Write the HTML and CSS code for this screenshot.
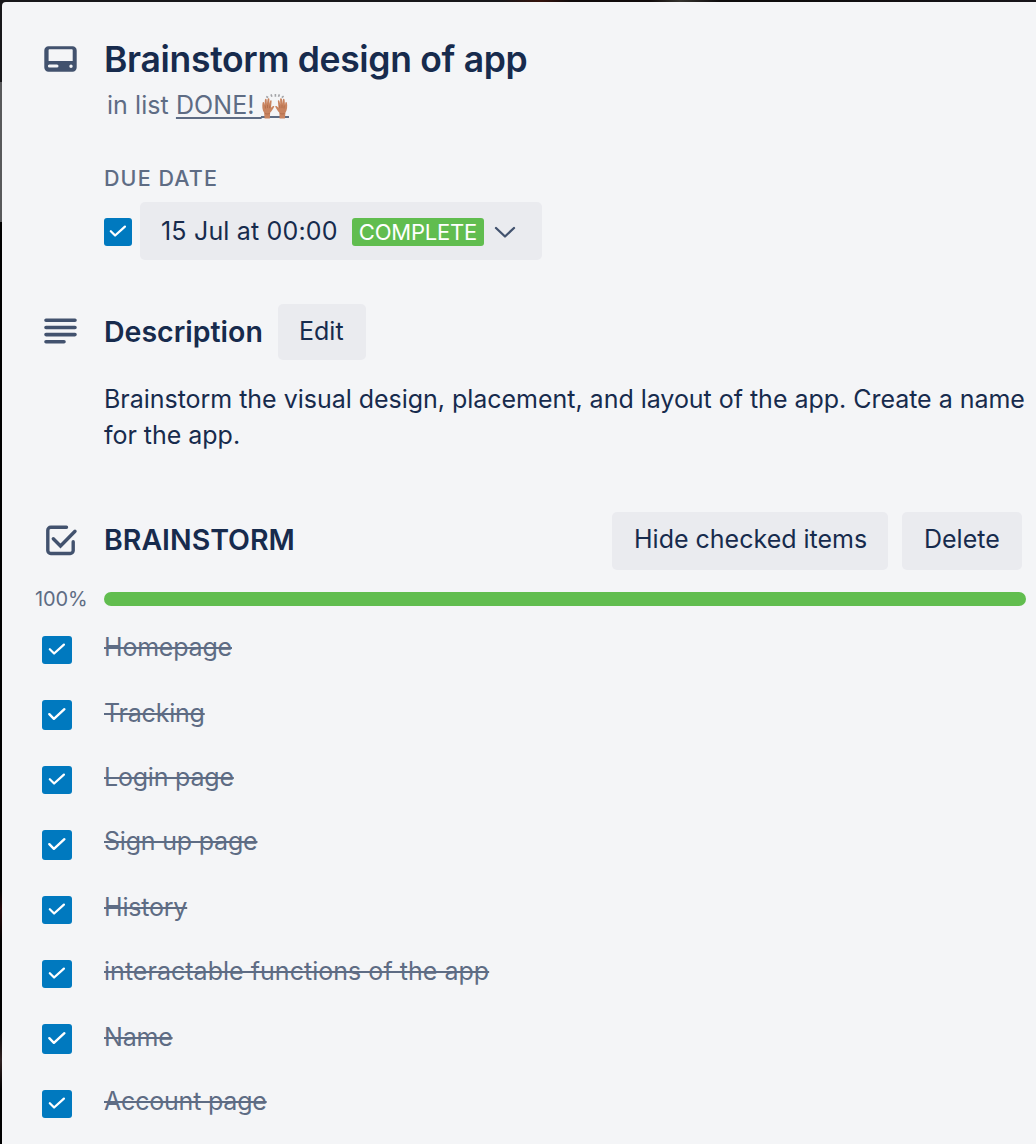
FILE: index.html
```html
<!DOCTYPE html>
<html lang="en">
<head>
<meta charset="utf-8">
<title>Brainstorm design of app</title>
<link rel="stylesheet" href="styles.css">
</head>
<body>
<svg class="symbols" aria-hidden="true">
  <symbol id="tick" viewBox="0 0 30 30"><path d="M7.3 14.2l4.6 4.6 10.5-9.6" fill="none" stroke="#fff" stroke-width="2.4" stroke-linecap="round" stroke-linejoin="round"/></symbol>
</svg>
<main class="card">
  <header class="card-header">
    <svg class="icon" viewBox="0 0 34 34"><path fill-rule="evenodd" d="M4.5 4.3h24a4.2 4.2 0 0 1 4.2 4.2v17a4.2 4.2 0 0 1-4.2 4.2h-24a4.2 4.2 0 0 1-4.2-4.2v-17a4.2 4.2 0 0 1 4.2-4.2zM4.6 8.1v10.8h24.1V8.1a.8.8 0 0 0-.8-.8H5.4a.8.8 0 0 0-.8.8zM5.4 22.6a1.5 1.5 0 0 0 0 3h7.6a1.5 1.5 0 0 0 0-3zM27 22.5a1.7 1.7 0 1 0 0 3.4 1.7 1.7 0 0 0 0-3.4z"/></svg>
    <h1 class="title">Brainstorm design of app</h1>
    <p class="in-list">in list <a class="list-link">DONE! <svg class="hands" viewBox="0 0 28 28"><g fill="none" stroke="#a3a4a8" stroke-width="1.6"><path d="M5.2 4.5l2 1M10 2.4l.9 2.3M14.4 2v2.8M18.4 2.4l-.9 2.3M22.6 4.2l-1.8 1.4"/></g><path d="M0 25h28" stroke="#5e6c84" stroke-width="2"/><g id="hand"><path fill="#c98460" d="M3.6 26.6l-.5-5.8C1.2 18 1 14 1.6 10.8c.3-1.3 1.5-1 1.6.1l.3 2 .4-5c.1-1.4 1.7-1.4 1.8 0l.2 3.8.7-4.6c.3-1.3 1.8-1 1.8.2l-.1 4.8.8-3.1c.4-1.1 1.6-.7 1.5.4l-.6 6.3 1.7-1.4c.9-.8 1.9-.3 1.4.7-1.1 2-2.4 4.4-4 5.8l-.2 5.8z"/><path d="M4.3 13.5l.2 3M6.5 12.8v3.3M8.9 13.4l-.3 2.8M4 21.5c2 .8 3.4.5 4.9-.4" fill="none" stroke="#aa6545" stroke-width=".7"/></g><use href="#hand" transform="matrix(-1 0 0 1 27.5 0)"/></svg></a></p>
  </header>

  <section class="due">
    <h3 class="label">DUE DATE</h3>
    <div class="due-row">
      <svg class="check"><use href="#tick"/></svg>
      <button class="button date"><span class="date-text">15 Jul at 00:00</span><span class="badge">COMPLETE</span><svg class="chevron" viewBox="0 0 22 14"><path d="M2 2l9 8.5L20 2" fill="none" stroke="#42526e" stroke-width="2.3" stroke-linecap="round" stroke-linejoin="round"/></svg></button>
    </div>
  </section>

  <section class="description">
    <div class="section-head">
      <svg class="icon" viewBox="0 0 34 34"><path d="M2 5.3h29M2 12.5h29M2 19.6h29M2 26.8h18" stroke="#42526e" stroke-width="3.6" stroke-linecap="round"/></svg>
      <h2 class="heading">Description</h2>
      <button class="button edit"><span>Edit</span></button>
    </div>
    <p class="text">Brainstorm the visual design, placement, and layout of the app. Create a name<br>for the app.</p>
  </section>

  <section class="checklist">
    <div class="section-head">
      <svg class="icon" viewBox="0 0 34 34"><path d="M22.5 4.2H6.8a3 3 0 0 0-3 3v20.3a3 3 0 0 0 3 3h19.4a3 3 0 0 0 3-3v-8.8M9.3 15.7l7.2 7.3L31 8.2" fill="none" stroke="#42526e" stroke-width="3.4" stroke-linecap="round" stroke-linejoin="miter"/></svg>
      <h2 class="heading">BRAINSTORM</h2>
      <div class="actions">
        <button class="button hide"><span>Hide checked items</span></button>
        <button class="button delete"><span>Delete</span></button>
      </div>
    </div>
    <div class="progress"><span class="percent">100%</span><div class="bar"></div></div>
    <ul class="items">
      <li class="item short"><svg class="check"><use href="#tick"/></svg><span>Homepage</span></li>
      <li class="item low"><svg class="check"><use href="#tick"/></svg><span>Tracking</span></li>
      <li class="item short"><svg class="check"><use href="#tick"/></svg><span>Login page</span></li>
      <li class="item"><svg class="check"><use href="#tick"/></svg><span>Sign up page</span></li>
      <li class="item short"><svg class="check"><use href="#tick"/></svg><span>History</span></li>
      <li class="item short wide"><svg class="check"><use href="#tick"/></svg><span>interactable functions of the app</span></li>
      <li class="item low"><svg class="check"><use href="#tick"/></svg><span>Name</span></li>
      <li class="item short"><svg class="check"><use href="#tick"/></svg><span>Account page</span></li>
    </ul>
  </section>
</main>
</body>
</html>
```
FILE: styles.css
```css
* { box-sizing: border-box; margin: 0; padding: 0; }
body {
  height: 1144px;
  overflow: hidden;
  padding: 2px 0 0 2px;
  background:
    linear-gradient(#17171a 0 82px, #58595b 82px 222px, #000 222px 890px, #240607 910px, #000 940px 1030px, #302222 1060px, #000 1090px) 0 0 / 2px 100% no-repeat,
    linear-gradient(90deg, #17171a 0 500px, #35120b 540px, #100b0b 570px 650px, #35332f 680px, #0e0c0d 720px 800px, #17151a) #17171a;
  font: 25px/36px Inter, "Liberation Sans", sans-serif;
  color: #172b4d;
}
h1, h2, h3 { font-weight: 600; }
svg { display: block; flex: none; }
.symbols { display: none; }
.card {
  height: 1142px;
  padding: 36px 0 0 42px;
  background: #f4f5f7;
  border-top-left-radius: 4px;
  white-space: nowrap;
}
.icon { width: 34px; height: 34px; fill: #42526e; }
.card-header {
  display: grid;
  grid-template-columns: 60px 1fr;
  grid-template-rows: 42px 50px;
  align-items: center;
}
.title { padding-top: 2px; font-size: 35.5px; line-height: 42px; letter-spacing: -.32px; }
.in-list { grid-column: 2; padding-left: 3px; color: #5e6c84; letter-spacing: .07px; }
.list-link { text-decoration: underline; text-decoration-thickness: 2px; text-underline-offset: 3px; text-decoration-skip-ink: none; }
.hands { display: inline-block; width: 28px; height: 28px; margin-left: -1px; vertical-align: -6px; }

.due { padding: 32px 0 0 60px; }
.label { height: 38px; font-size: 21.5px; font-weight: 500; line-height: 32px; letter-spacing: 1.1px; color: #5e6c84; }
.due-row { display: flex; align-items: center; gap: 8px; padding-top: 2px; }
.check { width: 30px; height: 30px; border-radius: 3px; background: #0079bf; }
.due-row .check { width: 28px; height: 28px; margin-top: 2px; }
.button {
  display: flex;
  height: 58px;
  padding: 0 21px;
  align-items: center;
  border: 0;
  border-radius: 5px;
  background: #eaebef;
  color: inherit;
  font: inherit;
}
.button > span:only-child { margin-top: -3px; }
.date { width: 402px; }
.date-text { width: 191px; letter-spacing: .18px; text-align: left; }
.badge { width: 132px; height: 28px; margin-top: 2px; border-radius: 3px; background: #61bd4f; color: #fff; font-size: 22px; line-height: 29px; letter-spacing: -.2px; text-align: center; }
.chevron { width: 22px; height: 14px; margin: 4px 0 0 10px; }

.section-head { display: flex; align-items: center; }
.heading { margin-left: 26px; font-size: 28.5px; line-height: 40px; }
.description { padding-top: 44px; }
.description .section-head { height: 56px; }
.edit { width: 88px; height: 56px; margin-left: auto; margin-right: 670px; }
.text { padding: 21px 0 0 60px; letter-spacing: -.025px; }

.checklist { padding-top: 59px; }
.checklist .section-head { height: 58px; }
.checklist .heading, .checklist .icon { margin-top: -3px; }
.actions { display: flex; gap: 14px; margin-left: auto; margin-right: 14px; }
.actions .button > span { margin-top: -5px; }
.hide { width: 276px; padding-left: 22px; }
.delete { width: 120px; padding-left: 22px; }
.progress { display: flex; height: 30px; margin: 14px 10px 0 -9px; align-items: center; }
.percent { width: 69px; font-size: 20px; letter-spacing: -.1px; color: #5e6c84; }
.bar { height: 14px; flex: 1; border-radius: 7px; background: #61bd4f; }

.items { padding-top: 15px; margin-left: -2px; list-style: none; color: #5e6c84; letter-spacing: -.2px; }
.item { display: flex; height: 64px; padding-top: 7px; align-items: flex-start; gap: 32px; }
.item span { margin-top: -7px; text-decoration: line-through; text-decoration-thickness: 2px; }
.item:nth-child(2), .item:nth-child(4), .item:nth-child(7) { height: 66px; }
.low span { margin-top: -5px; }
.short .check { height: 28px; }
.wide { letter-spacing: .03px; }
```
